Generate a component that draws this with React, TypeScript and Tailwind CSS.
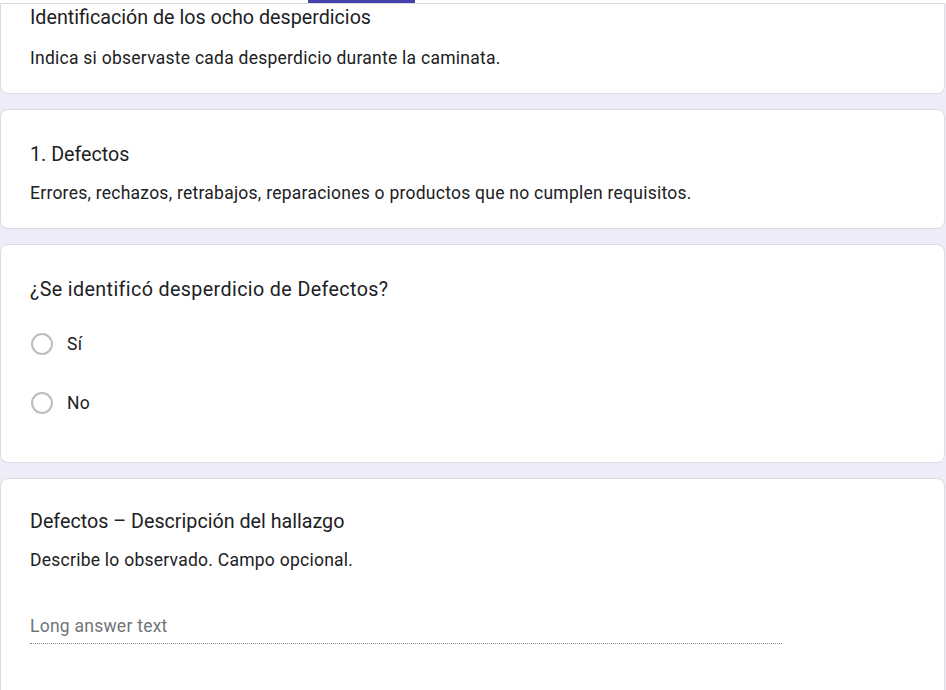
import React from "react";

function Radio({ label }: { label: string }) {
  return (
    <div className="flex items-center h-6">
      <div className="w-[22px] h-[22px] rounded-full border-2 border-[#bdbdbd] ml-[1px]" />
      <span className="ml-[14px] text-[17.5px] tracking-[0.25px] leading-6 text-[#202124]">
        {label}
      </span>
    </div>
  );
}

export default function App() {
  return (
    <div
      className="min-h-screen bg-[#edecf9] pb-10"
      style={{ fontFamily: "Roboto, 'Noto Sans', sans-serif" }}
    >
      <div className="h-[3px] bg-white flex">
        <div className="ml-[308px] w-[107px] bg-[#4343a9]" />
      </div>

      <div className="flex flex-col gap-[15px] w-[945px]">
        {/* Card 1 */}
        <div className="bg-white border border-[#dadce0] rounded-b-lg pl-[29px] pt-[2px] pb-[23px]">
          <div className="text-[19.7px] leading-6 text-[#202124]">
            Identificación de los ocho desperdicios
          </div>
          <div className="mt-[16px] text-[17.5px] tracking-[0.25px] leading-6 text-[#202124]">
            Indica si observaste cada desperdicio durante la caminata.
          </div>
        </div>

        {/* Card 2 */}
        <div className="bg-white border border-[#dadce0] rounded-lg pl-[29px] pt-[33px] pb-[23px]">
          <div className="text-[19.7px] leading-6 text-[#202124]">1. Defectos</div>
          <div className="mt-[14px] text-[17.5px] tracking-[0.25px] leading-6 text-[#202124]">
            Errores, rechazos, retrabajos, reparaciones o productos que no cumplen requisitos.
          </div>
        </div>

        {/* Card 3 */}
        <div className="bg-white border border-[#dadce0] rounded-lg pl-[29px] pt-[33px] pb-[47px]">
          <div className="text-[19.7px] tracking-[0.38px] leading-6 text-[#202124]">
            ¿Se identificó desperdicio de Defectos?
          </div>
          <div className="mt-[30px] flex flex-col gap-[35px]">
            <Radio label="Sí" />
            <Radio label="No" />
          </div>
        </div>

        {/* Card 4 */}
        <div className="bg-white border border-[#dadce0] rounded-lg pl-[29px] pt-[31px] pb-[60px]">
          <div className="text-[19.7px] leading-6 text-[#202124]">
            Defectos – Descripción del hallazgo
          </div>
          <div className="mt-[14px] text-[17.5px] tracking-[0.25px] leading-6 text-[#202124]">
            Describe lo observado. Campo opcional.
          </div>
          <div className="mt-[42px] w-[752px] border-b border-dotted border-[#80868b] pb-[5px]">
            <div className="text-[17.5px] tracking-[0.25px] leading-6 text-[#70757a]">
              Long answer text
            </div>
          </div>
        </div>
      </div>
    </div>
  );
}
